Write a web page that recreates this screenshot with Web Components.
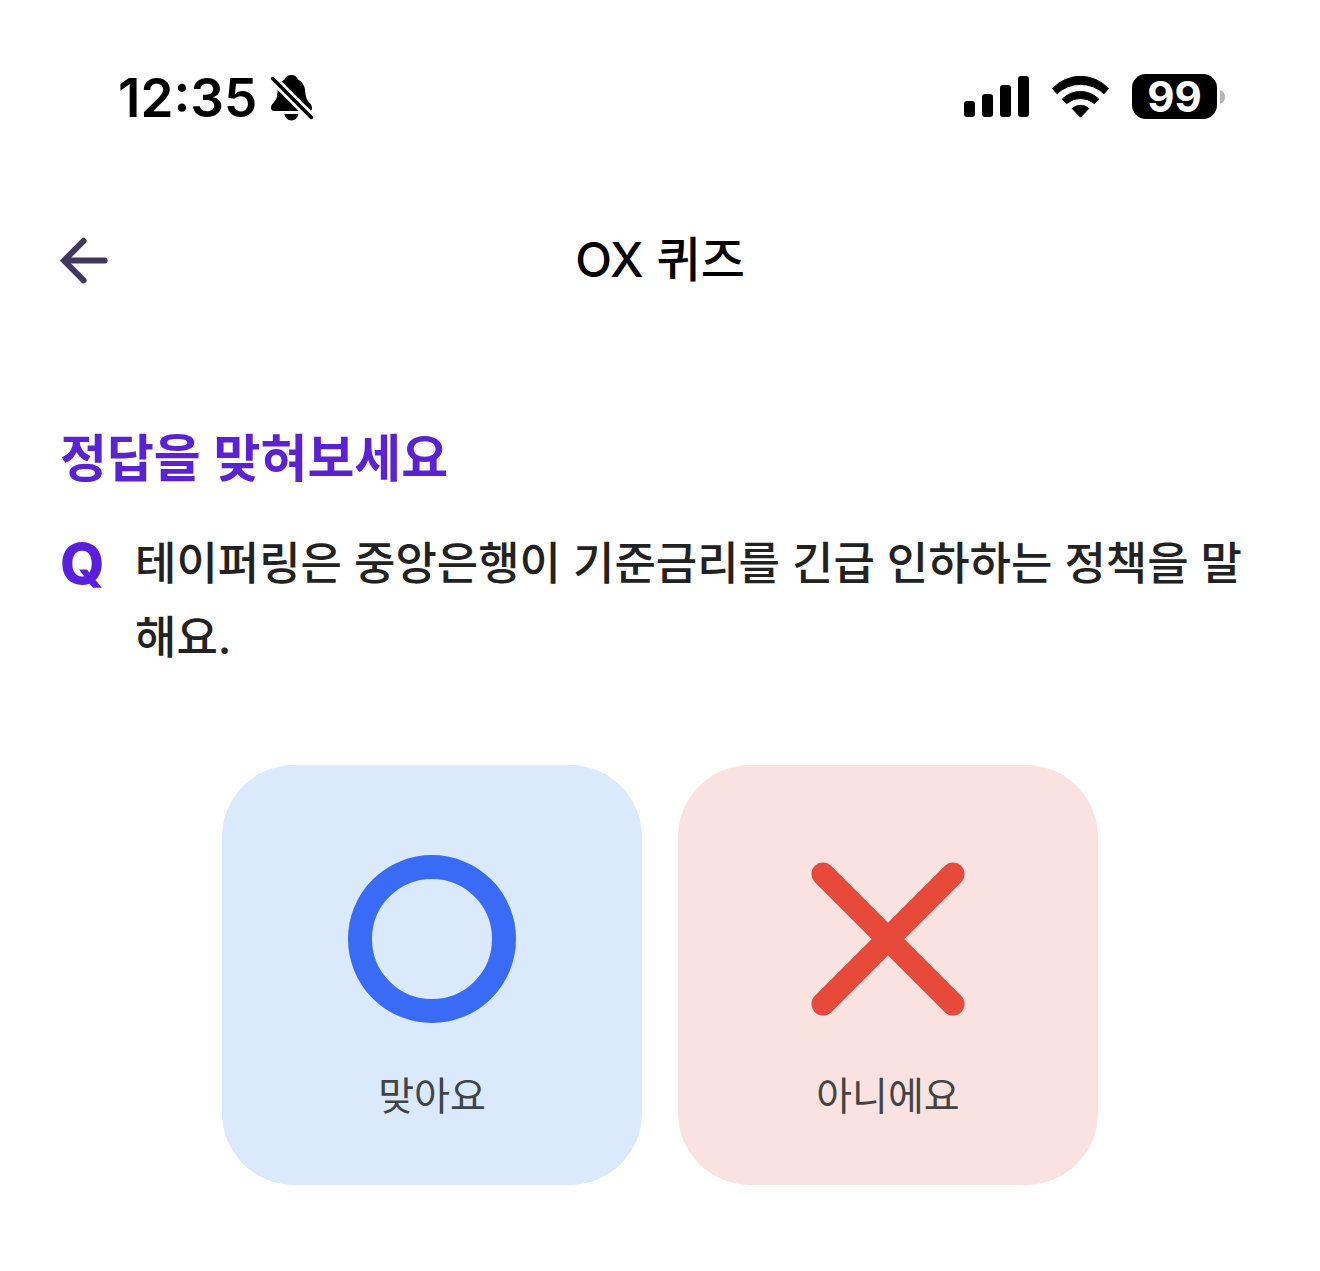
<!DOCTYPE html>
<html lang="ko">
<head>
  <meta charset="UTF-8">
  <meta name="viewport" content="width=device-width, initial-scale=1.0">
  <title>OX 퀴즈</title>
  <style>
    body {
      margin: 0;
      background: #fff;
      color: #000;
      font-family: Inter, "Noto Sans CJK KR", sans-serif;
    }
  </style>
</head>
<body>
  <status-bar time="12:35" battery="99"></status-bar>
  <nav-header>OX 퀴즈</nav-header>
  <quiz-card>
    <span slot="title">정답을 맞혀보세요</span>
    <span slot="question">테이퍼링은 중앙은행이 기준금리를 긴급 인하하는 정책을 말해요.</span>
    <answer-button type="o">맞아요</answer-button>
    <answer-button type="x">아니에요</answer-button>
  </quiz-card>

  <script>
    class StatusBar extends HTMLElement {
      connectedCallback() {
        this.attachShadow({ mode: 'open' });
        this.shadowRoot.innerHTML = `
          <style>
            :host {
              display: flex;
              justify-content: space-between;
              align-items: flex-start;
              padding: 74px 95px 72px 118px;
            }
            .left, .right, .battery {
              display: flex;
              align-items: center;
            }
            .left { gap: 13px; }
            .right { gap: 23px; }
            .time {
              font-size: 53px;
              font-weight: 600;
              line-height: 48px;
            }
            .battery { gap: 3px; }
            .level {
              width: 85px;
              border-radius: 14px;
              background: #000;
              color: #fff;
              font-size: 42px;
              font-weight: 700;
              line-height: 45px;
              text-align: center;
            }
            svg { display: block; }
          </style>
          <div class="left">
            <span class="time">${this.getAttribute('time')}</span>
            <svg width="44" height="46" viewBox="0 0 44 46" aria-hidden="true">
              <path d="M21.3 0C17.8 0 15.3 1.8 14.6 4.6C10.2 6.8 8 11 7.6 16C7.2 22 6.5 24.5 3.6 27.6C1.8 29.6 1 31 1 33C1 35 2.2 36 4.2 36H39C41 36 42 35 42 33C42 31 41.2 29.6 39.4 27.6C36.5 24.5 35.6 22 35.2 16C34.8 11 32.4 6.8 28 4.6C27.3 1.8 24.8 0 21.3 0Z"/>
              <path d="M14.4 39H28.4C27.6 43 25 45.4 21.4 45.4C17.8 45.4 15.2 43 14.4 39Z"/>
              <path d="M0 1L43 44" stroke="#fff" stroke-width="9"/>
              <path d="M2.6 3.6L41.4 42.4" stroke="#000" stroke-width="3.6" stroke-linecap="round"/>
            </svg>
          </div>
          <div class="right">
            <svg width="65" height="41" viewBox="0 0 65 41" aria-hidden="true">
              <rect x="0" y="25" width="11" height="16" rx="3"/>
              <rect x="18" y="18" width="11" height="23" rx="3"/>
              <rect x="36" y="9" width="11" height="32" rx="3"/>
              <rect x="54" y="0" width="11" height="41" rx="3"/>
            </svg>
            <svg width="57" height="42" viewBox="0 0 57 42" aria-hidden="true" stroke="#000" stroke-width="1" stroke-linejoin="round">
              <path d="M.5 12.5A38.3 38.3 0 0 1 56.5 12.5L52 17.7A34.3 34.3 0 0 0 5 17.7Z"/>
              <path d="M10.2 23.2A25.5 25.5 0 0 1 46.8 23.2L42.3 27.6A21 21 0 0 0 14.7 27.6Z"/>
              <path d="M20.2 32.5A12.5 12.5 0 0 1 36.8 32.5L28.5 41.2Z"/>
            </svg>
            <div class="battery">
              <span class="level">${this.getAttribute('battery')}</span>
              <svg width="5" height="14" viewBox="0 0 5 14" aria-hidden="true">
                <path d="M0 0C3 1 5 3.6 5 7S3 13 0 14Z" fill="#b5b5b5"/>
              </svg>
            </div>
          </div>
        `;
      }
    }

    class NavHeader extends HTMLElement {
      connectedCallback() {
        this.attachShadow({ mode: 'open' });
        this.shadowRoot.innerHTML = `
          <style>
            :host {
              display: grid;
              grid-template-columns: 48px 1fr 48px;
              align-items: center;
              padding: 30px 60px;
            }
            button {
              padding: 0;
              border: 0;
              background: none;
              cursor: pointer;
            }
            svg { display: block; }
            h1 {
              margin: 0;
              font-size: 48px;
              font-weight: 500;
              line-height: 72px;
              text-align: center;
            }
          </style>
          <button type="button" aria-label="뒤로">
            <svg width="48" height="48" viewBox="0 0 48 48" fill="none" stroke="#42375f" stroke-width="6" stroke-linecap="round">
              <path d="M23.6 4.8L4 24.6L23.6 44.4" stroke-linejoin="miter"/>
              <path d="M5 24.6H44.6"/>
            </svg>
          </button>
          <h1><slot></slot></h1>
        `;
      }
    }

    class QuizCard extends HTMLElement {
      connectedCallback() {
        this.attachShadow({ mode: 'open' });
        this.shadowRoot.innerHTML = `
          <style>
            :host {
              display: block;
              padding: 97px 60px;
            }
            h2 {
              margin: 0 0 32px;
              color: #5a22d3;
              font-size: 51px;
              font-weight: 600;
              line-height: 72px;
            }
            .question {
              display: grid;
              grid-template-columns: 43px 1fr;
              gap: 32px;
              line-height: 74px;
            }
            .mark {
              color: #5a1fdc;
              font-size: 57px;
              font-weight: 800;
            }
            p {
              margin: 0;
              color: #222;
              font-size: 45px;
              font-weight: 500;
            }
            .answers {
              display: flex;
              justify-content: center;
              gap: 36px;
              margin-top: 90px;
            }
          </style>
          <h2><slot name="title"></slot></h2>
          <div class="question">
            <span class="mark">Q</span>
            <p><slot name="question"></slot></p>
          </div>
          <div class="answers"><slot></slot></div>
        `;
      }
    }

    const marks = {
      o: '<circle cx="84" cy="84" r="72" stroke="#3a6bf7" stroke-width="24"/>',
      x: '<path d="M19 19L149 149M149 19L19 149" stroke="#e74a3b" stroke-width="23"/>'
    };

    class AnswerButton extends HTMLElement {
      connectedCallback() {
        this.attachShadow({ mode: 'open' });
        this.shadowRoot.innerHTML = `
          <style>
            :host {
              display: block;
              --card: #dae9fc;
              --label: #404446;
            }
            :host([type="x"]) {
              --card: #fae2e1;
              --label: #444;
            }
            button {
              display: flex;
              flex-direction: column;
              align-items: center;
              gap: 43px;
              width: 420px;
              height: 420px;
              padding: 90px 0 0;
              border: 0;
              border-radius: 72px;
              background: var(--card);
              color: var(--label);
              font-family: inherit;
              font-size: 39px;
              font-weight: 400;
              line-height: 60px;
              cursor: pointer;
            }
          </style>
          <button type="button">
            <svg width="168" height="168" viewBox="0 0 168 168" fill="none" stroke-linecap="round" aria-hidden="true">
              ${marks[this.getAttribute('type')]}
            </svg>
            <span><slot></slot></span>
          </button>
        `;
      }
    }

    customElements.define('status-bar', StatusBar);
    customElements.define('nav-header', NavHeader);
    customElements.define('quiz-card', QuizCard);
    customElements.define('answer-button', AnswerButton);
  </script>
</body>
</html>
